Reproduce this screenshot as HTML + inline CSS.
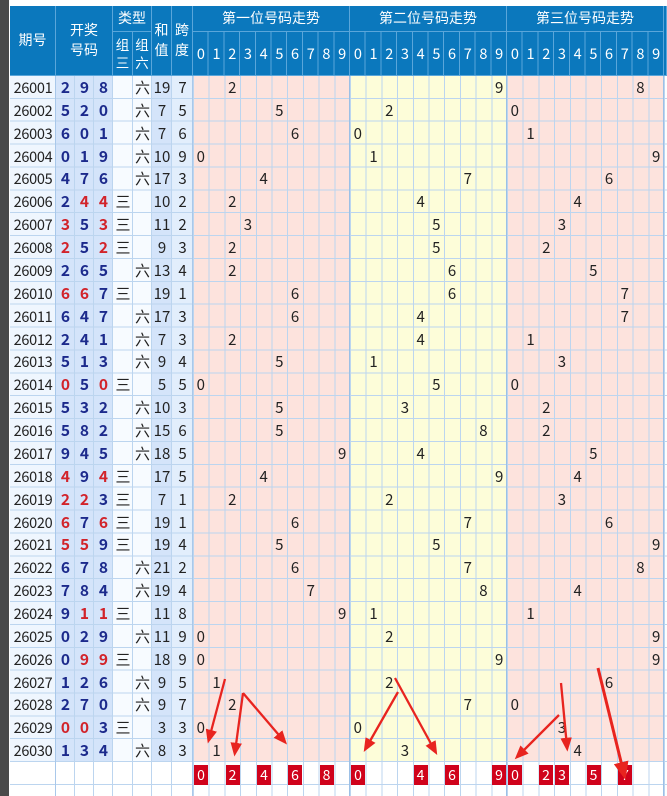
<!DOCTYPE html>
<html><head><meta charset="utf-8">
<style>
*{margin:0;padding:0;box-sizing:border-box}
body{width:667px;height:796px;overflow:hidden;background:#fff;position:relative;font-family:"Noto Sans CJK SC","Liberation Sans",sans-serif}
.abs{position:absolute}
.hd{position:absolute;background:#0b78bd;color:#fff;font-size:14px;display:flex;align-items:center;justify-content:center;text-align:center;line-height:1.4;border-right:1px solid #5aa6da;border-bottom:1px solid #5aa6da}
.r{position:absolute;left:0;width:667px;height:23px;font-size:15px;line-height:23px;color:#222}
.r span{position:absolute;text-align:center;top:0}
.q{left:10px;width:46px;font-size:14.5px;letter-spacing:-0.3px}
.n{width:19px;font-weight:bold;color:#1c2a8c;font-size:15.5px}
.n.red{color:#d2232a}
.n1{left:56px}.n2{left:75px}.n3{left:94px}
.t3{left:113px;width:20px}.t6{left:133px;width:19px}
.s{left:152px;width:20px}.k{left:172px;width:21px}
.d{width:15.7px}
.a0{left:193px}.a1{left:208.7px}.a2{left:224.4px}.a3{left:240.1px}.a4{left:255.8px}.a5{left:271.5px}.a6{left:287.2px}.a7{left:302.9px}.a8{left:318.6px}.a9{left:334.3px}
.b0{left:350px}.b1{left:365.7px}.b2{left:381.4px}.b3{left:397.1px}.b4{left:412.8px}.b5{left:428.5px}.b6{left:444.2px}.b7{left:459.9px}.b8{left:475.6px}.b9{left:491.3px}
.e0{left:507px}.e1{left:522.7px}.e2{left:538.4px}.e3{left:554.1px}.e4{left:569.8px}.e5{left:585.5px}.e6{left:601.2px}.e7{left:616.9px}.e8{left:632.6px}.e9{left:648.3px}
.box{position:absolute;top:765px;width:14px;height:20px;background:#d0021b;color:#fff;font-size:14px;line-height:20px;text-align:center}
</style></head><body>
<div class="abs" style="left:0;top:0;width:9px;height:796px;background:#4a4a4a"></div>
<div class="abs" style="left:10px;top:76px;width:46px;height:686px;background:#eff6fe"></div>
<div class="abs" style="left:56px;top:76px;width:57px;height:686px;background:#d4e4fa"></div>
<div class="abs" style="left:113px;top:76px;width:39px;height:686px;background:#f7fbff"></div>
<div class="abs" style="left:152px;top:76px;width:20px;height:686px;background:#d4e4fa"></div>
<div class="abs" style="left:172px;top:76px;width:21px;height:686px;background:#e2eefc"></div>
<div class="abs" style="left:193px;top:76px;width:157px;height:686px;background:#fde3dd"></div>
<div class="abs" style="left:350px;top:76px;width:157px;height:686px;background:#fdfdd9"></div>
<div class="abs" style="left:507px;top:76px;width:157px;height:686px;background:#fde3dd"></div>
<div class="abs" style="left:10px;top:76px;width:657px;height:720px;background:repeating-linear-gradient(to bottom,transparent 0,transparent 21.87px,#bcd5ef 21.87px,#bcd5ef 22.87px)"></div>
<div class="abs" style="left:193px;top:76px;width:474px;height:720px;background:repeating-linear-gradient(to right,#bcd5ef 0,#bcd5ef 1px,transparent 1px,transparent 15.7px)"></div>
<div class="abs" style="left:55px;top:76px;width:1px;height:720px;background:#a9c8ea"></div>
<div class="abs" style="left:74px;top:76px;width:1px;height:720px;background:#bcd5ef"></div>
<div class="abs" style="left:93px;top:76px;width:1px;height:720px;background:#bcd5ef"></div>
<div class="abs" style="left:112px;top:76px;width:1px;height:720px;background:#bcd5ef"></div>
<div class="abs" style="left:132px;top:76px;width:1px;height:720px;background:#bcd5ef"></div>
<div class="abs" style="left:151px;top:76px;width:1px;height:720px;background:#bcd5ef"></div>
<div class="abs" style="left:171px;top:76px;width:1px;height:720px;background:#bcd5ef"></div>
<div class="abs" style="left:192px;top:76px;width:1px;height:720px;background:#a9c8ea"></div>
<div class="abs" style="left:349px;top:76px;width:1px;height:720px;background:#9cc0e6"></div>
<div class="abs" style="left:506px;top:76px;width:1px;height:720px;background:#9cc0e6"></div>
<div class="abs" style="left:663px;top:76px;width:1px;height:720px;background:#9cc0e6"></div>

<div class="abs" style="left:10px;top:6px;width:657px;height:70px;background:#0b78bd"></div>
<div class="hd" style="left:10px;top:6px;width:46px;height:70px">期号</div>
<div class="hd" style="left:56px;top:6px;width:57px;height:70px">开奖<br>号码</div>
<div class="hd" style="left:113px;top:6px;width:39px;height:26px">类型</div>
<div class="hd" style="left:113px;top:32px;width:20px;height:44px;font-size:13.5px;line-height:1.3">组<br>三</div>
<div class="hd" style="left:133px;top:32px;width:19px;height:44px;font-size:13.5px;line-height:1.3">组<br>六</div>
<div class="hd" style="left:152px;top:6px;width:20px;height:70px">和<br>值</div>
<div class="hd" style="left:172px;top:6px;width:21px;height:70px">跨<br>度</div>
<div class="hd" style="left:193px;top:6px;width:157px;height:26px">第一位号码走势</div>
<div class="hd" style="left:350px;top:6px;width:157px;height:26px">第二位号码走势</div>
<div class="hd" style="left:507px;top:6px;width:157px;height:26px">第三位号码走势</div>
<div class="hd" style="left:664px;top:6px;width:3px;height:70px"></div>
<div class="abs" style="left:193px;top:32px;width:471px;height:44px;background:repeating-linear-gradient(to right,transparent 0,transparent 14.7px,#5aa6da 14.7px,#5aa6da 15.7px);border-bottom:1px solid #5aa6da"></div>
<div class="r" style="top:40px;color:#fff;font-size:14.5px;height:28px;line-height:28px">
<span class="d a0">0</span><span class="d a1">1</span><span class="d a2">2</span><span class="d a3">3</span><span class="d a4">4</span><span class="d a5">5</span><span class="d a6">6</span><span class="d a7">7</span><span class="d a8">8</span><span class="d a9">9</span>
<span class="d b0">0</span><span class="d b1">1</span><span class="d b2">2</span><span class="d b3">3</span><span class="d b4">4</span><span class="d b5">5</span><span class="d b6">6</span><span class="d b7">7</span><span class="d b8">8</span><span class="d b9">9</span>
<span class="d e0">0</span><span class="d e1">1</span><span class="d e2">2</span><span class="d e3">3</span><span class="d e4">4</span><span class="d e5">5</span><span class="d e6">6</span><span class="d e7">7</span><span class="d e8">8</span><span class="d e9">9</span>
</div>

<div class="r" style="top:76px"><span class="q">26001</span><span class="n n1">2</span><span class="n n2">9</span><span class="n n3">8</span><span class="t6">六</span><span class="s">19</span><span class="k">7</span><span class="d a2">2</span><span class="d b9">9</span><span class="d e8">8</span></div>
<div class="r" style="top:98.87px"><span class="q">26002</span><span class="n n1">5</span><span class="n n2">2</span><span class="n n3">0</span><span class="t6">六</span><span class="s">7</span><span class="k">5</span><span class="d a5">5</span><span class="d b2">2</span><span class="d e0">0</span></div>
<div class="r" style="top:121.74px"><span class="q">26003</span><span class="n n1">6</span><span class="n n2">0</span><span class="n n3">1</span><span class="t6">六</span><span class="s">7</span><span class="k">6</span><span class="d a6">6</span><span class="d b0">0</span><span class="d e1">1</span></div>
<div class="r" style="top:144.61px"><span class="q">26004</span><span class="n n1">0</span><span class="n n2">1</span><span class="n n3">9</span><span class="t6">六</span><span class="s">10</span><span class="k">9</span><span class="d a0">0</span><span class="d b1">1</span><span class="d e9">9</span></div>
<div class="r" style="top:167.48px"><span class="q">26005</span><span class="n n1">4</span><span class="n n2">7</span><span class="n n3">6</span><span class="t6">六</span><span class="s">17</span><span class="k">3</span><span class="d a4">4</span><span class="d b7">7</span><span class="d e6">6</span></div>
<div class="r" style="top:190.35px"><span class="q">26006</span><span class="n n1">2</span><span class="n n2 red">4</span><span class="n n3 red">4</span><span class="t3">三</span><span class="s">10</span><span class="k">2</span><span class="d a2">2</span><span class="d b4">4</span><span class="d e4">4</span></div>
<div class="r" style="top:213.22px"><span class="q">26007</span><span class="n n1 red">3</span><span class="n n2">5</span><span class="n n3 red">3</span><span class="t3">三</span><span class="s">11</span><span class="k">2</span><span class="d a3">3</span><span class="d b5">5</span><span class="d e3">3</span></div>
<div class="r" style="top:236.09px"><span class="q">26008</span><span class="n n1 red">2</span><span class="n n2">5</span><span class="n n3 red">2</span><span class="t3">三</span><span class="s">9</span><span class="k">3</span><span class="d a2">2</span><span class="d b5">5</span><span class="d e2">2</span></div>
<div class="r" style="top:258.96px"><span class="q">26009</span><span class="n n1">2</span><span class="n n2">6</span><span class="n n3">5</span><span class="t6">六</span><span class="s">13</span><span class="k">4</span><span class="d a2">2</span><span class="d b6">6</span><span class="d e5">5</span></div>
<div class="r" style="top:281.83px"><span class="q">26010</span><span class="n n1 red">6</span><span class="n n2 red">6</span><span class="n n3">7</span><span class="t3">三</span><span class="s">19</span><span class="k">1</span><span class="d a6">6</span><span class="d b6">6</span><span class="d e7">7</span></div>
<div class="r" style="top:304.7px"><span class="q">26011</span><span class="n n1">6</span><span class="n n2">4</span><span class="n n3">7</span><span class="t6">六</span><span class="s">17</span><span class="k">3</span><span class="d a6">6</span><span class="d b4">4</span><span class="d e7">7</span></div>
<div class="r" style="top:327.57px"><span class="q">26012</span><span class="n n1">2</span><span class="n n2">4</span><span class="n n3">1</span><span class="t6">六</span><span class="s">7</span><span class="k">3</span><span class="d a2">2</span><span class="d b4">4</span><span class="d e1">1</span></div>
<div class="r" style="top:350.44px"><span class="q">26013</span><span class="n n1">5</span><span class="n n2">1</span><span class="n n3">3</span><span class="t6">六</span><span class="s">9</span><span class="k">4</span><span class="d a5">5</span><span class="d b1">1</span><span class="d e3">3</span></div>
<div class="r" style="top:373.31px"><span class="q">26014</span><span class="n n1 red">0</span><span class="n n2">5</span><span class="n n3 red">0</span><span class="t3">三</span><span class="s">5</span><span class="k">5</span><span class="d a0">0</span><span class="d b5">5</span><span class="d e0">0</span></div>
<div class="r" style="top:396.18px"><span class="q">26015</span><span class="n n1">5</span><span class="n n2">3</span><span class="n n3">2</span><span class="t6">六</span><span class="s">10</span><span class="k">3</span><span class="d a5">5</span><span class="d b3">3</span><span class="d e2">2</span></div>
<div class="r" style="top:419.05px"><span class="q">26016</span><span class="n n1">5</span><span class="n n2">8</span><span class="n n3">2</span><span class="t6">六</span><span class="s">15</span><span class="k">6</span><span class="d a5">5</span><span class="d b8">8</span><span class="d e2">2</span></div>
<div class="r" style="top:441.92px"><span class="q">26017</span><span class="n n1">9</span><span class="n n2">4</span><span class="n n3">5</span><span class="t6">六</span><span class="s">18</span><span class="k">5</span><span class="d a9">9</span><span class="d b4">4</span><span class="d e5">5</span></div>
<div class="r" style="top:464.79px"><span class="q">26018</span><span class="n n1 red">4</span><span class="n n2">9</span><span class="n n3 red">4</span><span class="t3">三</span><span class="s">17</span><span class="k">5</span><span class="d a4">4</span><span class="d b9">9</span><span class="d e4">4</span></div>
<div class="r" style="top:487.66px"><span class="q">26019</span><span class="n n1 red">2</span><span class="n n2 red">2</span><span class="n n3">3</span><span class="t3">三</span><span class="s">7</span><span class="k">1</span><span class="d a2">2</span><span class="d b2">2</span><span class="d e3">3</span></div>
<div class="r" style="top:510.53px"><span class="q">26020</span><span class="n n1 red">6</span><span class="n n2">7</span><span class="n n3 red">6</span><span class="t3">三</span><span class="s">19</span><span class="k">1</span><span class="d a6">6</span><span class="d b7">7</span><span class="d e6">6</span></div>
<div class="r" style="top:533.4px"><span class="q">26021</span><span class="n n1 red">5</span><span class="n n2 red">5</span><span class="n n3">9</span><span class="t3">三</span><span class="s">19</span><span class="k">4</span><span class="d a5">5</span><span class="d b5">5</span><span class="d e9">9</span></div>
<div class="r" style="top:556.27px"><span class="q">26022</span><span class="n n1">6</span><span class="n n2">7</span><span class="n n3">8</span><span class="t6">六</span><span class="s">21</span><span class="k">2</span><span class="d a6">6</span><span class="d b7">7</span><span class="d e8">8</span></div>
<div class="r" style="top:579.14px"><span class="q">26023</span><span class="n n1">7</span><span class="n n2">8</span><span class="n n3">4</span><span class="t6">六</span><span class="s">19</span><span class="k">4</span><span class="d a7">7</span><span class="d b8">8</span><span class="d e4">4</span></div>
<div class="r" style="top:602.01px"><span class="q">26024</span><span class="n n1">9</span><span class="n n2 red">1</span><span class="n n3 red">1</span><span class="t3">三</span><span class="s">11</span><span class="k">8</span><span class="d a9">9</span><span class="d b1">1</span><span class="d e1">1</span></div>
<div class="r" style="top:624.88px"><span class="q">26025</span><span class="n n1">0</span><span class="n n2">2</span><span class="n n3">9</span><span class="t6">六</span><span class="s">11</span><span class="k">9</span><span class="d a0">0</span><span class="d b2">2</span><span class="d e9">9</span></div>
<div class="r" style="top:647.75px"><span class="q">26026</span><span class="n n1">0</span><span class="n n2 red">9</span><span class="n n3 red">9</span><span class="t3">三</span><span class="s">18</span><span class="k">9</span><span class="d a0">0</span><span class="d b9">9</span><span class="d e9">9</span></div>
<div class="r" style="top:670.62px"><span class="q">26027</span><span class="n n1">1</span><span class="n n2">2</span><span class="n n3">6</span><span class="t6">六</span><span class="s">9</span><span class="k">5</span><span class="d a1">1</span><span class="d b2">2</span><span class="d e6">6</span></div>
<div class="r" style="top:693.49px"><span class="q">26028</span><span class="n n1">2</span><span class="n n2">7</span><span class="n n3">0</span><span class="t6">六</span><span class="s">9</span><span class="k">7</span><span class="d a2">2</span><span class="d b7">7</span><span class="d e0">0</span></div>
<div class="r" style="top:716.36px"><span class="q">26029</span><span class="n n1 red">0</span><span class="n n2 red">0</span><span class="n n3">3</span><span class="t3">三</span><span class="s">3</span><span class="k">3</span><span class="d a0">0</span><span class="d b0">0</span><span class="d e3">3</span></div>
<div class="r" style="top:739.23px"><span class="q">26030</span><span class="n n1">1</span><span class="n n2">3</span><span class="n n3">4</span><span class="t6">六</span><span class="s">8</span><span class="k">3</span><span class="d a1">1</span><span class="d b3">3</span><span class="d e4">4</span></div>

<div class="box" style="left:194px">0</div>
<div class="box" style="left:225.5px">2</div>
<div class="box" style="left:257px">4</div>
<div class="box" style="left:288px">6</div>
<div class="box" style="left:319.5px">8</div>
<div class="box" style="left:351px">0</div>
<div class="box" style="left:413.5px">4</div>
<div class="box" style="left:445px">6</div>
<div class="box" style="left:492px">9</div>
<div class="box" style="left:508px">0</div>
<div class="box" style="left:539px">2</div>
<div class="box" style="left:555px">3</div>
<div class="box" style="left:586.5px">5</div>
<div class="box" style="left:618px">7</div>

<svg class="abs" style="left:0;top:0" width="667" height="796" viewBox="0 0 667 796">
<defs><marker id="ah" markerWidth="6" markerHeight="5" refX="4" refY="2.5" orient="auto" markerUnits="strokeWidth"><path d="M0,0 L6,2.5 L0,5 z" fill="#e8241f"/></marker></defs>
<g stroke="#e8241f" stroke-width="2.3" fill="none" marker-end="url(#ah)">
<line x1="225" y1="679" x2="209" y2="739"/>
<line x1="243" y1="693" x2="235" y2="752"/>
<line x1="243" y1="693" x2="284" y2="741"/>
<line x1="398" y1="692" x2="366" y2="748"/>
<line x1="395" y1="678" x2="435" y2="751"/>
<line x1="559" y1="715" x2="518" y2="756"/>
<line x1="561" y1="683" x2="567" y2="747"/>
<line x1="598" y1="668" x2="624" y2="774" stroke-width="3"/>
</g>
</svg>
</body></html>
